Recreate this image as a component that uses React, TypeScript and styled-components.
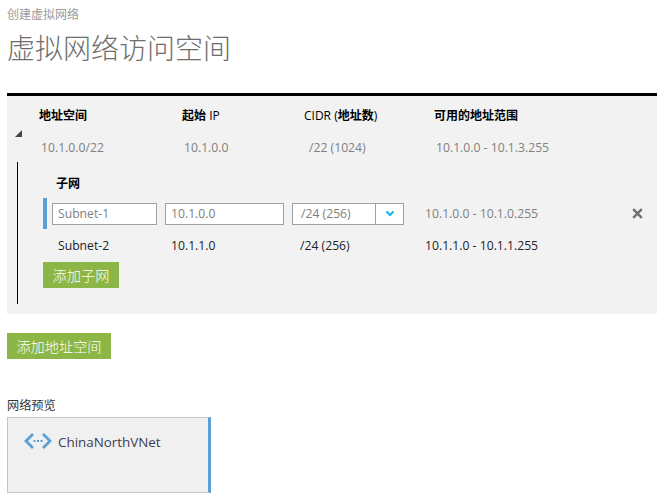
import React from "react";
import styled, { createGlobalStyle } from "styled-components";

const GlobalStyle = createGlobalStyle`
  html, body {
    margin: 0;
    padding: 0;
    background: #fff;
  }
  body {
    font-family: "Open Sans", "Noto Sans CJK SC", sans-serif;
    font-size: 12.2px;
    color: #222;
  }
`;

const Page = styled.div`
  width: 664px;
  height: 501px;
  overflow: hidden;
  padding: 7px 7px 0;
  box-sizing: border-box;
`;

const Crumb = styled.div`
  height: 15px;
  line-height: 15px;
  font-size: 12px;
  color: #9a9a9a;
`;

const Title = styled.h1`
  margin: 11px 0 0;
  height: 30px;
  line-height: 30px;
  font-size: 28px;
  font-weight: 300;
  color: #6e6e6e;
`;

const Panel = styled.section`
  margin-top: 30px;
  width: 650px;
  height: 221px;
  box-sizing: border-box;
  border-top: 3px solid #000;
  background: #f2f2f2;
  position: relative;
`;

const Row = styled.div<{ $columns: string; $height: number }>`
  display: grid;
  grid-template-columns: ${(p) => p.$columns};
  align-items: center;
  height: ${(p) => p.$height}px;
`;

const HeadRow = styled(Row)`
  margin-top: 9px;
  font-weight: 700;
  font-size: 12px;
  color: #000;
`;

const ValueRow = styled(Row)`
  padding-top: 8px;
`;

const Cell = styled.div<{ $tone?: string; $inset?: number }>`
  padding-left: ${(p) => p.$inset ?? 0}px;
  color: ${(p) => p.$tone ?? "inherit"};
  white-space: nowrap;
`;

const Light = styled.span`
  font-weight: 400;
`;

const Triangle = styled.span`
  position: absolute;
  left: 8px;
  top: 34px;
  width: 0;
  height: 0;
  border-style: solid;
  border-width: 0 0 7px 7px;
  border-color: transparent transparent #444 transparent;
`;

const Nested = styled.div`
  margin: 0 0 0 10px;
  height: 142px;
  border-left: 1px solid #000;
  padding-left: 25px;
  box-sizing: border-box;
  position: relative;
`;

const SubnetTitle = styled.div`
  padding: 14px 0 0 13px;
  height: 15px;
  line-height: 15px;
  font-size: 12px;
  font-weight: 700;
  color: #000;
`;

const EditRow = styled.div`
  display: flex;
  align-items: center;
  margin-top: 7px;
  height: 31px;
  border-left: 4px solid #5a9fd6;
  padding-left: 5px;
  position: relative;
`;

const TextInput = styled.input<{ $width: number }>`
  width: ${(p) => p.$width}px;
  height: 22px;
  box-sizing: border-box;
  margin-right: 8px;
  padding: 0 5px;
  border: 1px solid #a0a0a0;
  background: #fff;
  font: inherit;
  color: #808080;
`;

const SelectBox = styled.div`
  display: flex;
  align-items: stretch;
  width: 112px;
  height: 22px;
  box-sizing: border-box;
  border: 1px solid #a0a0a0;
  background: #fff;
  color: #808080;
`;

const SelectValue = styled.div`
  flex: 1;
  padding-left: 8px;
  line-height: 20px;
`;

const SelectArrow = styled.div`
  width: 27px;
  border-left: 1px solid #a0a0a0;
  display: flex;
  align-items: center;
  justify-content: center;
`;

const RangeText = styled.div`
  margin-left: 21px;
  color: #808080;
`;

const CloseIcon = styled.svg`
  position: absolute;
  left: 585px;
  top: 10px;
`;

const PlainRow = styled(Row)`
  margin-top: 1px;
  color: #222;
`;

const GreenButton = styled.button<{ $width: number }>`
  display: block;
  width: ${(p) => p.$width}px;
  height: 26px;
  padding: 0;
  border: 0;
  background: #8cb645;
  color: #fff;
  font-family: inherit;
  font-size: 14.2px;
  font-weight: 300;
`;

const AddSubnet = styled(GreenButton)`
  margin-top: 2px;
`;

const AddSpace = styled(GreenButton)`
  margin-top: 19px;
`;

const PreviewLabel = styled.div`
  margin-top: 38px;
  height: 17px;
  line-height: 17px;
  color: #333;
`;

const PreviewCard = styled.div`
  display: flex;
  align-items: flex-start;
  gap: 6px;
  margin-top: 3px;
  width: 204px;
  height: 76px;
  box-sizing: border-box;
  padding: 14px 0 0 16px;
  background: #f0f0f0;
  border: 1px solid #c4c4c4;
  border-right: 3px solid #5a9fd6;
`;

const CardName = styled.div`
  font-size: 13.4px;
  line-height: 20px;
  color: #3c3c50;
`;

const headColumns = "32px 143px 122px 130px 1fr";
const subnetColumns = "14px 114px 121px 133px 1fr";

const App = () => {
  return (
    <>
      <GlobalStyle />
      <Page>
        <Crumb>创建虚拟网络</Crumb>
        <Title>虚拟网络访问空间</Title>
        <Panel>
          <Triangle />
          <HeadRow $columns={headColumns} $height={20}>
            <span />
            <Cell>地址空间</Cell>
            <Cell>
              起始 <Light>IP</Light>
            </Cell>
            <Cell>
              <Light>CIDR (</Light>地址数<Light>)</Light>
            </Cell>
            <Cell>可用的地址范围</Cell>
          </HeadRow>
          <ValueRow $columns={headColumns} $height={29}>
            <span />
            <Cell $tone="#808080" $inset={2}>10.1.0.0/22</Cell>
            <Cell $tone="#808080" $inset={2}>10.1.0.0</Cell>
            <Cell $tone="#808080" $inset={5}>/22 (1024)</Cell>
            <Cell $tone="#808080" $inset={2}>10.1.0.0 - 10.1.3.255</Cell>
          </ValueRow>
          <Nested>
            <SubnetTitle>子网</SubnetTitle>
            <EditRow>
              <TextInput $width={105} defaultValue="Subnet-1" />
              <TextInput $width={119} defaultValue="10.1.0.0" />
              <SelectBox>
                <SelectValue>/24 (256)</SelectValue>
                <SelectArrow>
                  <svg width="10" height="7" viewBox="0 0 10 7">
                    <path d="M1.5 1.5 5 5l3.5-3.5" fill="none" stroke="#12b5ea" strokeWidth="2" />
                  </svg>
                </SelectArrow>
              </SelectBox>
              <RangeText>10.1.0.0 - 10.1.0.255</RangeText>
              <CloseIcon width="11" height="11" viewBox="0 0 11 11">
                <path d="M1.2 1.2l8.6 8.6M9.8 1.2 1.2 9.8" stroke="#6b7075" strokeWidth="2.4" />
              </CloseIcon>
            </EditRow>
            <PlainRow $columns={subnetColumns} $height={30}>
              <span />
              <Cell $inset={1}>Subnet-2</Cell>
              <Cell>10.1.1.0</Cell>
              <Cell $inset={8}>/24 (256)</Cell>
              <Cell>10.1.1.0 - 10.1.1.255</Cell>
            </PlainRow>
            <AddSubnet $width={76}>添加子网</AddSubnet>
          </Nested>
        </Panel>
        <AddSpace $width={104}>添加地址空间</AddSpace>
        <PreviewLabel>网络预览</PreviewLabel>
        <PreviewCard>
          <svg width="28" height="18" viewBox="0 0 28 18">
            <path d="M9 2 2 9l7 7M19 2l7 7-7 7" fill="none" stroke="#5a9fd6" strokeWidth="2.8" />
            <path d="M9.5 8h2v2h-2zM13 8h2v2h-2zM16.5 8h2v2h-2z" fill="#5a9fd6" />
          </svg>
          <CardName>ChinaNorthVNet</CardName>
        </PreviewCard>
      </Page>
    </>
  );
};

export default App;
